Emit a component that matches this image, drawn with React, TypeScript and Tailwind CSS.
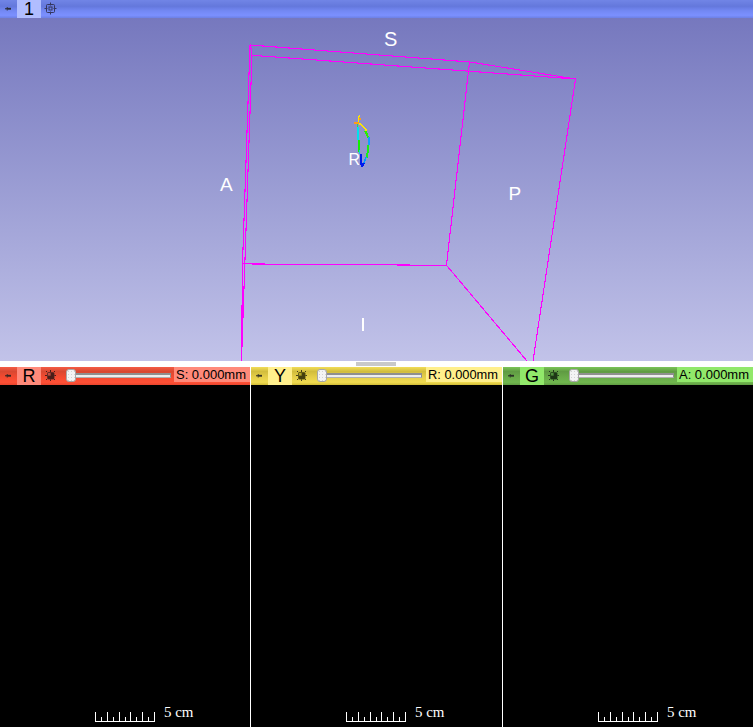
type SliceProps = {
  letter: string;
  value: string;
  bar: string;
  light: string;
  glow: string;
  width: string;
};

function Pin() {
  return (
    <svg width="17" height="18" viewBox="0 0 17 18" className="shrink-0">
      <path d="M5 8h6v1.4H5z" fill="#222" opacity=".7" />
      <path d="M6.6 7h1.4v3.4H6.6zM8 7.8h3v2H8z" fill="#222" opacity=".6" />
    </svg>
  );
}

function Target() {
  return (
    <svg width="13" height="13" viewBox="0 0 13 13" className="mb-px ml-[3px] shrink-0" fill="none" stroke="#34375e">
      <rect x="2.5" y="2.5" width="8" height="8" rx="1" />
      <rect x="5" y="5" width="3" height="3" />
      <path d="M6.5 .5v3M6.5 9.5v3M.5 6.5h3M9.5 6.5h3" />
    </svg>
  );
}

function SliceIcon({ glow }: { glow: string }) {
  return (
    <svg width="13" height="13" viewBox="0 0 13 13" className="mb-px ml-[3px] shrink-0">
      <path d="M6 1h1v11H6zM1 6h11v1H1zM2 2h1v1H2zM10 2h1v1h-1zM2 10h1v1H2zM10 10h1v1h-1z" fill="#111" opacity=".75" />
      <rect x="3" y="3" width="7.5" height="7.5" rx="1.5" fill={glow} />
      <rect x="3" y="3" width="7.5" height="7.5" rx="1.5" fill="#000" opacity=".5" />
      <rect x="4" y="4" width="2.5" height="2.5" fill={glow} opacity=".8" />
      <path d="M7 4h3v6H4V7h3z" fill="#000" opacity=".3" />
    </svg>
  );
}

function Slider() {
  return (
    <div className="mb-px ml-[9px] flex h-[13px] w-[106px] shrink-0 items-center">
      <div className="z-10 h-[13px] w-[10px] shrink-0 rounded-[3px] border border-[#a7a7a7] bg-[#f4f4f4] bg-[radial-gradient(#d3d3d3_0.6px,transparent_0.8px)] bg-[length:3px_3px]" />
      <div className="h-[5px] w-[95px] border border-t-2 border-l-0 border-[#8f8f8f] border-b-[#b0b0b0] bg-[#eeeeee]" />
    </div>
  );
}

function SliceView({ letter, value, bar, light, glow, width }: SliceProps) {
  return (
    <section className={`flex shrink-0 flex-col ${width}`}>
      <header className={`flex h-[18px] items-center ${bar}`}>
        <Pin />
        <div className={`flex h-[18px] w-6 shrink-0 items-center justify-center text-[18px] leading-[18px] ${light}`}>{letter}</div>
        <SliceIcon glow={glow} />
        <Slider />
        <div className={`ml-auto h-[15px] w-[76px] shrink-0 self-start pl-[2px] ${light}`}>
          <svg width="74" height="15" className="block">
            <text x="0" y="12" fontSize="12.5" textLength="70" lengthAdjust="spacingAndGlyphs">{value}</text>
          </svg>
        </div>
      </header>
      <div className="flex grow items-end bg-black pb-[5px] pl-[95px] text-white">
        <svg width="61" height="10" shapeRendering="crispEdges" stroke="white" fill="none">
          <path d="M.5 0v9.5h59V0M12.5 0v9M24.5 0v9M35.5 0v9M47.5 0v9M6.5 5v4M18.5 5v4M30.5 5v4M41.5 5v4M53.5 5v4" />
        </svg>
        <svg width="34" height="17" className="ml-2">
          <text x="0" y="12" fill="white" fontSize="14.5" fontFamily="Liberation Serif, serif" textLength="29.5" lengthAdjust="spacingAndGlyphs">5 cm</text>
        </svg>
      </div>
    </section>
  );
}

function Scene() {
  return (
    <svg width="753" height="343" viewBox="0 18 753 343" className="block shrink-0 bg-gradient-to-b from-[#7678be] to-[#c2c3e9]">
      <g fill="none" stroke="#ff00ff" strokeWidth="1.1" shapeRendering="crispEdges">
        <path d="M250 45L470 62L575.5 79L252 55.3L250.5 45" />
        <path d="M250 45L242.5 264L241.5 361M252 55L241.5 361" />
        <path d="M243 263.9L446.5 265.3L527 361M469.5 62L446.5 265M575.5 79L533 361" />
      </g>
      <g fill="none" strokeWidth="1.5" shapeRendering="crispEdges">
        <path d="M359.5 115l-1 3v5l3 2l4 4l1 2" stroke="#ffe600" />
        <path d="M360 118v2M354 123h5" stroke="#ff9d18" />
        <path d="M357.5 124v3" stroke="#2edc4b" />
        <path d="M358 127v13" stroke="#00e1ed" />
        <path d="M358.5 140v9l1 3" stroke="#13ef00" strokeWidth="2" />
        <path d="M359.5 150v4" stroke="#00d9d9" />
        <path d="M360.5 154v9l1.5 3l2-3" stroke="#001bed" strokeWidth="2" />
        <path d="M365 131l2 3l1 4" stroke="#28ef00" strokeWidth="2" />
        <path d="M368.5 137v8" stroke="#149eff" strokeWidth="2" />
        <path d="M368.5 145l-1 8l-1 5" stroke="#18ef16" strokeWidth="2" />
        <path d="M366 157l-2 6" stroke="#009cff" />
      </g>
      <g fill="white" fontFamily="Liberation Sans, Arial, sans-serif" fontSize="19">
        <text x="384" y="45.5" fontSize="20">S</text>
        <text x="220" y="191">A</text>
        <text x="508.5" y="200">P</text>
        <text x="348.5" y="165" fontSize="16">R</text>
        <path d="M362 318h2v13h-2z" />
      </g>
    </svg>
  );
}

export default function App() {
  return (
    <main className="flex h-[727px] w-[753px] flex-col overflow-hidden bg-white font-['Liberation_Sans',Arial,sans-serif] text-black">
      <header className="flex h-[18px] shrink-0 items-center bg-[linear-gradient(#7185e6_0%,#6478dc_35%,#7388f3_60%,#7b90ff_85%,#6c80e5_100%)]">
        <Pin />
        <div className="flex h-[18px] w-6 items-center justify-center bg-[#b0bdff] text-[18px] leading-[18px]">1</div>
        <Target />
      </header>
      <Scene />
      <div className="flex h-[6px] shrink-0 justify-center pt-px pr-px">
        <div className="h-[4px] w-[40px] bg-[#c9c9c9]" />
      </div>
      <div className="flex grow gap-px bg-white">
        <SliceView letter="R" value="S: 0.000mm" glow="#d45749" width="w-[250px]" light="bg-[#ff8a7a]" bar="bg-[linear-gradient(#f45c45_0%,#d94831_25%,#f34a30_55%,#ff5036_85%,#e8452d_100%)]" />
        <SliceView letter="Y" value="R: 0.000mm" glow="#c6b82b" width="w-[251px]" light="bg-[#ffef8c]" bar="bg-[linear-gradient(#f2dd58_0%,#d2bd3d_25%,#e5ce48_55%,#f0db50_85%,#d1bb36_100%)]" />
        <SliceView letter="G" value="A: 0.000mm" glow="#589f41" width="w-[250px]" light="bg-[#91e86a]" bar="bg-[linear-gradient(#7bc557_0%,#609b43_25%,#69aa49_55%,#70b74e_85%,#609c42_100%)]" />
      </div>
    </main>
  );
}
